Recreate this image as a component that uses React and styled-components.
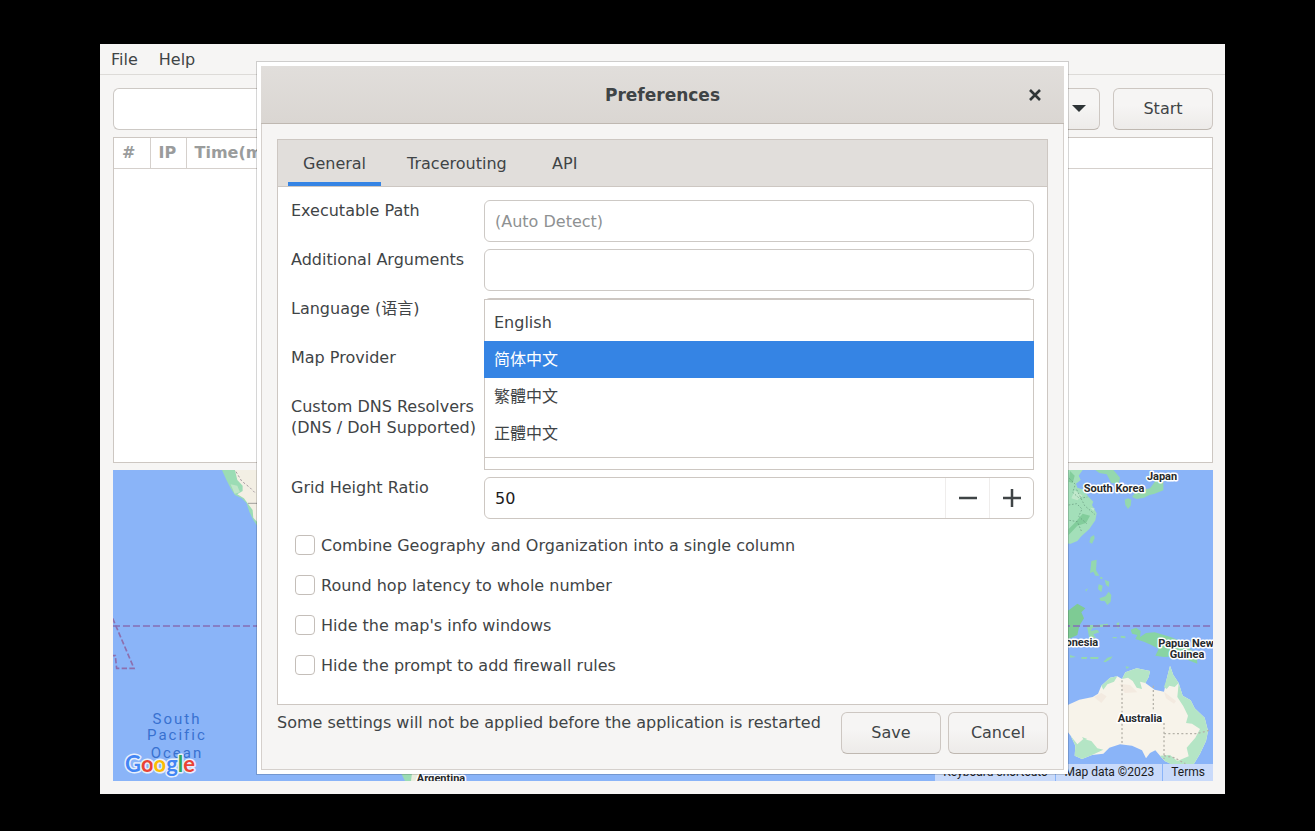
import { useState } from 'react'
import styled, { createGlobalStyle } from 'styled-components'

const GlobalStyle = createGlobalStyle`
  * {
    box-sizing: border-box;
  }
  body {
    margin: 0;
    background: #000;
  }
  body, button, input, select, textarea {
    font-family: "DejaVu Sans", "Noto Sans CJK SC", sans-serif;
    font-size: 16px;
    line-height: 21px;
    color: #3f4446;
  }
`

/* ---------- main window ---------- */

const Desktop = styled.div`
  display: flex;
  min-height: 100vh;
  padding: 44px 90px 37px 100px;
  background: #000;
`

const Window = styled.main`
  position: relative;
  flex: 1;
  display: flex;
  flex-direction: column;
  min-width: 0;
  background: #f6f5f4;
`

const MenuBar = styled.nav`
  display: flex;
  gap: 21px;
  height: 31px;
  padding: 0 11px;
  border-bottom: 1px solid #dddbd8;
`

const MenuItem = styled.button`
  padding: 0;
  border: none;
  background: none;
`

const Content = styled.div`
  flex: 1;
  display: flex;
  flex-direction: column;
  gap: 7px;
  padding: 13px 12px 13px 13px;
`

const Toolbar = styled.div`
  display: flex;
  gap: 13px;
`

const HostBox = styled.div`
  flex: 1;
  display: flex;
`

const Entry = styled.input`
  width: 100%;
  min-width: 0;
  height: 42px;
  padding: 0 10px;
  border: 1px solid #cdc9c5;
  border-radius: 6px;
  background: #fff;
  outline: none;
  &::placeholder {
    color: #8e9192;
    opacity: 1;
  }
`

const HostEntry = styled(Entry)`
  border-right: none;
  border-radius: 6px 0 0 6px;
`

const Button = styled.button`
  width: 100px;
  height: 42px;
  padding: 0 0 2px;
  border: 1px solid #cdc7c2;
  border-bottom-color: #bfb8b1;
  border-radius: 6px;
  background: linear-gradient(to top, #edebe9, #f6f5f4 60%);
`

const ArrowButton = styled(Button)`
  display: flex;
  align-items: center;
  justify-content: center;
  width: 44px;
  border-radius: 0 6px 6px 0;
`

const GridFrame = styled.div`
  flex: 325 1 0;
  border: 1px solid #cdc7c2;
  background: #fff;
`

const HopTable = styled.table`
  width: 100%;
  border-collapse: collapse;
  th {
    height: 30px;
    min-width: 36px;
    padding: 0 8px 1px;
    border-right: 1px solid #d5d0cc;
    border-bottom: 1px solid #d5d0cc;
    color: #9a9c9c;
    font-weight: bold;
    text-align: left;
    white-space: nowrap;
  }
  th:last-child {
    width: 100%;
    border-right: none;
  }
`

/* ---------- map ---------- */

const MapFrame = styled.section`
  position: relative;
  flex: 312 1 0;
  overflow: hidden;
  background: #8ab4f8;
`

const MapDrawing = styled.svg`
  position: absolute;
  width: 100%;
  height: 100%;
  font-family: Roboto, sans-serif;
`

const Country = styled.text`
  font-size: 11px;
  font-weight: 700;
  fill: #26292c;
  stroke: #fff;
  stroke-width: 3px;
  stroke-linejoin: round;
  paint-order: stroke;
  text-anchor: middle;
`

const Ocean = styled.text`
  font-size: 15px;
  letter-spacing: 2px;
  fill: #3871d0;
  text-anchor: middle;
`

const Logo = styled.text`
  font-family: Lato, sans-serif;
  font-size: 22px;
  font-weight: 700;
  stroke: #e8effc;
  stroke-width: 3px;
  stroke-linejoin: round;
  paint-order: stroke;
`

const Attribution = styled.div`
  position: absolute;
  right: 0;
  bottom: 0;
  display: flex;
  gap: 1px;
  a, span {
    padding: 0 8px;
    background: #c9dafa;
    color: #1c1c1c;
    font: 12px/17px Roboto, sans-serif;
    text-decoration: none;
  }
`

function WorldMap() {
  return (
    <MapFrame aria-label="Map">
      <MapDrawing viewBox="0 0 1100 311" preserveAspectRatio="xMidYMid slice">
        {/* North America */}
        <g transform="translate(-13 -15) scale(.3333)">
          <path fill="#9bdcb4" d="M366 45L378 72L392 100L405 120L425 130L440 145L448 170L460 195L480 225V45Z" />
          <path fill="#f3efe4" d="M405 45L412 75L428 92L428 108L412 118L432 130L444 146L458 165L460 188L480 210V45Z" />
          <path fill="#bfe6c8" d="M392 88L412 92L420 112L404 116Z" />
          <path fill="none" stroke="#a59aa0" strokeWidth="3" strokeDasharray="7 6" d="M408 50L425 78L450 98L468 116" />
          <path stroke="#777" strokeWidth="2" d="M444 145H480" />
          <path fill="none" stroke="#8d6fae" strokeWidth="5" strokeDasharray="16 7" d="M38 490L102 640H50L46 602H36" />
        </g>
        {/* Patagonia */}
        <path fill="#9bdcb4" d="M288 303L292 311H299L302 303Z" />
        <path fill="#e9eddf" d="M299 303L298 311H304L308 303Z" />
        {/* Asia and Oceania */}
        <g transform="translate(927 -15) scale(.3333)">
          <path fill="#a3dfb9" d="M60 45H128L116 62L122 75L108 86L112 98L132 104L144 124L160 140L156 150L170 175L166 196L148 222L124 244L112 258L92 266L60 264Z" />
          <path fill="#82cd9b" d="M90 48L104 62L98 84L86 80ZM128 176L150 182L138 204L112 212L86 240V222L104 204Z" />
          <path fill="#c0e8cb" d="M104 106L128 122L112 136L94 130ZM150 158L164 160L160 168Z" />
          <path fill="none" stroke="#64967b" strokeWidth="2" strokeDasharray="5 5" d="M88 70L106 88L98 112L118 130L142 126M86 150L110 146L126 162L116 184L140 206M88 196L112 200L124 228M110 104L134 152L164 178" />
          <path fill="#94d8ae" d="M166 45H220L240 68L236 86L214 84L200 58L178 54ZM254 134L264 130L274 134L272 152L264 162L256 150ZM276 126L286 112L300 106L330 100L346 78L370 80L370 106L344 116L328 120L312 128L290 132ZM220 104L230 104L228 110ZM152 246L162 240L164 250L156 266L148 262Z" />
          <path fill="#94d8ae" d="M154 318L170 314L168 346L178 362L166 362L160 350L150 354ZM180 366L186 366L188 372L182 372ZM194 374L208 380L206 396L198 390ZM176 388L188 392L184 412L174 402ZM178 430L196 424L206 410L214 420L212 440L202 450L194 438L182 438ZM136 404L144 400L138 410Z" />
          <path fill="#7ecb94" d="M60 470L86 466L112 446L136 460L124 472L132 490L118 512L112 540L86 552H60Z" />
          <path fill="#94d8ae" d="M140 510H170L204 506L204 514L158 518L152 528L172 524L178 532L160 538L168 550L148 548ZM230 504L238 502L236 520L230 516ZM218 546H230V550H218ZM242 542L256 544V550L242 548ZM90 600L108 606L90 608ZM124 606L142 606L140 612H124ZM150 606L176 606L174 612H152ZM190 620L202 608L218 604L212 612L196 622ZM256 634L268 636L260 642Z" />
          <path fill="#88d4a3" d="M272 524L288 518L302 528L300 546L318 534L344 532L392 546L430 562L470 600L472 626L436 612L410 604L372 606L346 602L356 582L334 570L312 560L286 552L292 540L276 536Z" />
          <path fill="#f7f3ea" d="M60 762L88 748L118 734L158 726L174 716L184 692L210 668L232 664L246 672L256 652L290 640L330 648L326 666L316 684L344 704L372 710L380 672L390 632L400 660L416 684L428 722L452 736L464 760L494 788L504 828L498 858L480 896L462 926L440 936L404 932L374 918L360 902L346 886L330 894L318 910L306 886L276 872L240 868L208 878L190 896L156 900L126 912L104 902L106 872L92 842L60 800Z" />
          <path fill="#b4e5c5" d="M184 692L210 668L232 664L222 680L202 688L190 704ZM246 672L256 652L290 640L330 648L326 666L316 684L300 680L306 702L290 698L278 678L264 668ZM380 672L390 632L400 660L416 684L404 696L388 692L380 702L372 696ZM416 684L428 722L452 736L464 760L494 788L504 828L498 858L480 896L462 926L440 936L404 932L374 918L360 902L390 900L412 918L446 904L440 878L466 848L480 822L456 806L438 804L444 782L430 754L412 726ZM92 842L112 868L130 852L154 858L172 880L190 884L156 900L126 912L104 902L106 872ZM126 846L142 852L132 856Z" />
          <path fill="#f3eae0" d="M162 726L184 714L200 724L184 744ZM372 710L408 738L402 746L378 730ZM238 686L270 690L292 712L254 714Z" />
          <path fill="none" stroke="#b5b2a9" strokeWidth="4" strokeDasharray="6 7" d="M246 676V868M340 692V770M372 804V912M372 836H470L508 826M372 902L402 908L436 926" />
          <path fill="#94d8ae" d="M370 928L394 926L388 940L376 950Z" />
        </g>
        <path stroke="#8572b8" strokeWidth="2" strokeOpacity=".8" strokeDasharray="7 3" d="M0 156H1100" />
        <Ocean x="64" y="254">South</Ocean>
        <Ocean x="64" y="270">Pacific</Ocean>
        <Ocean x="64" y="288">Ocean</Ocean>
        <Country x="1049" y="10">Japan</Country>
        <Country x="1001" y="22">South Korea</Country>
        <Country x="961" y="176">Indonesia</Country>
        <Country x="1073" y="177">Papua New</Country>
        <Country x="1074" y="188">Guinea</Country>
        <Country x="1027" y="252">Australia</Country>
        <Country x="328" y="312">Argentina</Country>
        <Logo x="12" y="302">
          <tspan fill="#4285f4">G</tspan>
          <tspan fill="#ea4335">o</tspan>
          <tspan fill="#fbbc05">o</tspan>
          <tspan fill="#4285f4">g</tspan>
          <tspan fill="#34a853">l</tspan>
          <tspan fill="#ea4335">e</tspan>
        </Logo>
      </MapDrawing>
      <Attribution>
        <a href="#shortcuts">Keyboard shortcuts</a>
        <span>Map data ©2023</span>
        <a href="#terms">Terms</a>
      </Attribution>
    </MapFrame>
  )
}

/* ---------- preferences dialog ---------- */

const Overlay = styled.div`
  position: absolute;
  inset: 0;
  display: flex;
  align-items: center;
  justify-content: center;
  padding-bottom: 2px;
`

const Dialog = styled.section`
  width: 100%;
  max-width: 813px;
  padding: 4px;
  border: 1px solid rgba(0, 0, 0, 0.16);
  background: #fff;
  background-clip: padding-box;
`

const TitleBar = styled.header`
  display: grid;
  grid-template-columns: 58px 1fr 58px;
  align-items: center;
  height: 58px;
  border-bottom: 1px solid #bfb8b1;
  background: linear-gradient(#e1dedb, #dad6d2);
`

const Title = styled.h1`
  grid-column: 2;
  margin: 0;
  font-size: 17px;
  line-height: 22px;
  text-align: center;
`

const CloseButton = styled.button`
  display: flex;
  justify-content: center;
  padding: 8px;
  border: none;
  background: none;
`

const DialogBody = styled.div`
  display: flex;
  flex-direction: column;
  gap: 7px;
  padding: 15px;
  border: 1px solid #d5d0cc;
  border-top: none;
  background: #f6f5f4;
`

const Notebook = styled.div`
  border: 1px solid #cdc7c2;
  background: #fff;
`

const TabList = styled.div`
  display: flex;
  gap: 11px;
  height: 47px;
  padding: 0 10px;
  border-bottom: 1px solid #cdc7c2;
  background: #e1dedb;
`

const Tab = styled.button`
  min-width: 64px;
  padding: 0 15px;
  border: none;
  border-top: 4px solid transparent;
  border-bottom: 4px solid ${({ $active }) => ($active ? '#3584e4' : 'transparent')};
  background: none;
`

const Page = styled.div`
  padding: 13px 13px 19px;
`

const Form = styled.div`
  display: grid;
  grid-template-columns: minmax(187px, max-content) 1fr;
  gap: 7px 6px;
  margin-bottom: 6px;
`

const FieldLabel = styled.label`
  white-space: pre-line;
`

const DropDown = styled.div`
  position: relative;
`

const Select = styled.select`
  width: 100%;
  height: 42px;
  padding: 0 10px;
  border: 1px solid #cdc7c2;
  border-radius: 6px;
  background: #f6f5f4;
`

const Popup = styled.ul`
  position: absolute;
  z-index: 1;
  top: 1px;
  left: 0;
  right: 0;
  margin: 0;
  padding: 4px 0 5px;
  border: 1px solid #cdc7c2;
  background: #fff;
  list-style: none;
`

const Option = styled.li`
  height: 37px;
  margin: 0 -1px;
  padding: 8px 10px;
  background: ${({ $selected }) => ($selected ? '#3584e4' : 'transparent')};
  color: ${({ $selected }) => ($selected ? '#fff' : 'inherit')};
`

const Resolvers = styled.textarea`
  display: block;
  width: 100%;
  height: 74px;
  border: 1px solid #cdc7c2;
  resize: none;
  outline: none;
`

const SpinBox = styled.div`
  display: flex;
  height: 42px;
  border: 1px solid #cdc7c2;
  border-radius: 6px;
  background: #fff;
`

const SpinEntry = styled.input`
  flex: 1;
  min-width: 0;
  padding: 0 10px;
  border: none;
  background: none;
  color: #1c1c1c;
  outline: none;
`

const SpinButton = styled.button`
  display: flex;
  align-items: center;
  justify-content: center;
  width: 44px;
  padding: 0;
  border: none;
  border-left: 1px solid #efedec;
  background: none;
`

const CheckRow = styled.label`
  display: flex;
  align-items: center;
  gap: 6px;
  height: 40px;
  padding-left: 4px;
`

const CheckBox = styled.input`
  appearance: none;
  width: 20px;
  height: 20px;
  margin: 0;
  border: 1px solid #c4beb9;
  border-radius: 4px;
  background: #fff;
  &:checked {
    background: #3584e4;
  }
`

const Footer = styled.footer`
  display: flex;
  gap: 7px;
`

const Notice = styled.p`
  flex: 1;
  margin: 0;
`

const TABS = ['General', 'Tracerouting', 'API']

const LANGUAGES = [
  { code: 'en', name: 'English' },
  { code: 'zh-CN', name: '简体中文' },
  { code: 'zh-HK', name: '繁體中文' },
  { code: 'zh-TW', name: '正體中文' },
]

const CHECKS = [
  'Combine Geography and Organization into a single column',
  'Round hop latency to whole number',
  "Hide the map's info windows",
  'Hide the prompt to add firewall rules',
]

function Preferences() {
  const [tab, setTab] = useState('General')
  const [language, setLanguage] = useState('zh-CN')
  const [ratio, setRatio] = useState(50)

  return (
    <Dialog role="dialog" aria-labelledby="prefs-title">
      <TitleBar>
        <Title id="prefs-title">Preferences</Title>
        <CloseButton aria-label="Close">
          <svg width="12" height="12" viewBox="0 0 12 12" stroke="#2e3436" strokeWidth="2.6">
            <path d="M1 1L11 11M11 1L1 11" />
          </svg>
        </CloseButton>
      </TitleBar>
      <DialogBody>
        <Notebook>
          <TabList role="tablist">
            {TABS.map((name) => (
              <Tab key={name} role="tab" aria-selected={tab === name} $active={tab === name} onClick={() => setTab(name)}>
                {name}
              </Tab>
            ))}
          </TabList>
          <Page role="tabpanel">
            <Form>
              <FieldLabel htmlFor="path">Executable Path</FieldLabel>
              <Entry id="path" placeholder="(Auto Detect)" />
              <FieldLabel htmlFor="args">Additional Arguments</FieldLabel>
              <Entry id="args" />
              <FieldLabel htmlFor="language">Language (语言)</FieldLabel>
              <DropDown>
                <Select id="language" value={language} onChange={(e) => setLanguage(e.target.value)}>
                  {LANGUAGES.map(({ code, name }) => (
                    <option key={code} value={code}>{name}</option>
                  ))}
                </Select>
                <Popup role="listbox" aria-label="Language">
                  {LANGUAGES.map(({ code, name }) => (
                    <Option
                      key={code}
                      role="option"
                      aria-selected={code === language}
                      $selected={code === language}
                      onClick={() => setLanguage(code)}
                    >
                      {name}
                    </Option>
                  ))}
                </Popup>
              </DropDown>
              <FieldLabel htmlFor="provider">Map Provider</FieldLabel>
              <Select id="provider" />
              <FieldLabel htmlFor="dns">{'Custom DNS Resolvers\n(DNS / DoH Supported)'}</FieldLabel>
              <Resolvers id="dns" />
              <FieldLabel htmlFor="ratio">Grid Height Ratio</FieldLabel>
              <SpinBox>
                <SpinEntry id="ratio" value={ratio} onChange={(e) => setRatio(Number(e.target.value) || 0)} />
                <SpinButton aria-label="Decrease" onClick={() => setRatio(ratio - 1)}>
                  <svg width="18" height="18" stroke="#3f4446" strokeWidth="2.5">
                    <path d="M0 9H18" />
                  </svg>
                </SpinButton>
                <SpinButton aria-label="Increase" onClick={() => setRatio(ratio + 1)}>
                  <svg width="18" height="18" stroke="#3f4446" strokeWidth="2.5">
                    <path d="M0 9H18M9 0V18" />
                  </svg>
                </SpinButton>
              </SpinBox>
            </Form>
            {CHECKS.map((text) => (
              <CheckRow key={text}>
                <CheckBox type="checkbox" />
                {text}
              </CheckRow>
            ))}
          </Page>
        </Notebook>
        <Footer>
          <Notice>Some settings will not be applied before the application is restarted</Notice>
          <Button>Save</Button>
          <Button>Cancel</Button>
        </Footer>
      </DialogBody>
    </Dialog>
  )
}

export default function App() {
  return (
    <>
      <GlobalStyle />
      <Desktop>
        <Window>
          <MenuBar>
            <MenuItem>File</MenuItem>
            <MenuItem>Help</MenuItem>
          </MenuBar>
          <Content>
            <Toolbar>
              <HostBox>
                <HostEntry aria-label="Host" />
                <ArrowButton aria-label="Recent hosts">
                  <svg width="14" height="7" fill="#2e3436">
                    <path d="M0 0H14L7 7Z" />
                  </svg>
                </ArrowButton>
              </HostBox>
              <Button>Start</Button>
            </Toolbar>
            <GridFrame>
              <HopTable>
                <thead>
                  <tr>
                    <th>#</th>
                    <th>IP</th>
                    <th>Time(ms)</th>
                  </tr>
                </thead>
              </HopTable>
            </GridFrame>
            <WorldMap />
          </Content>
          <Overlay>
            <Preferences />
          </Overlay>
        </Window>
      </Desktop>
    </>
  )
}
